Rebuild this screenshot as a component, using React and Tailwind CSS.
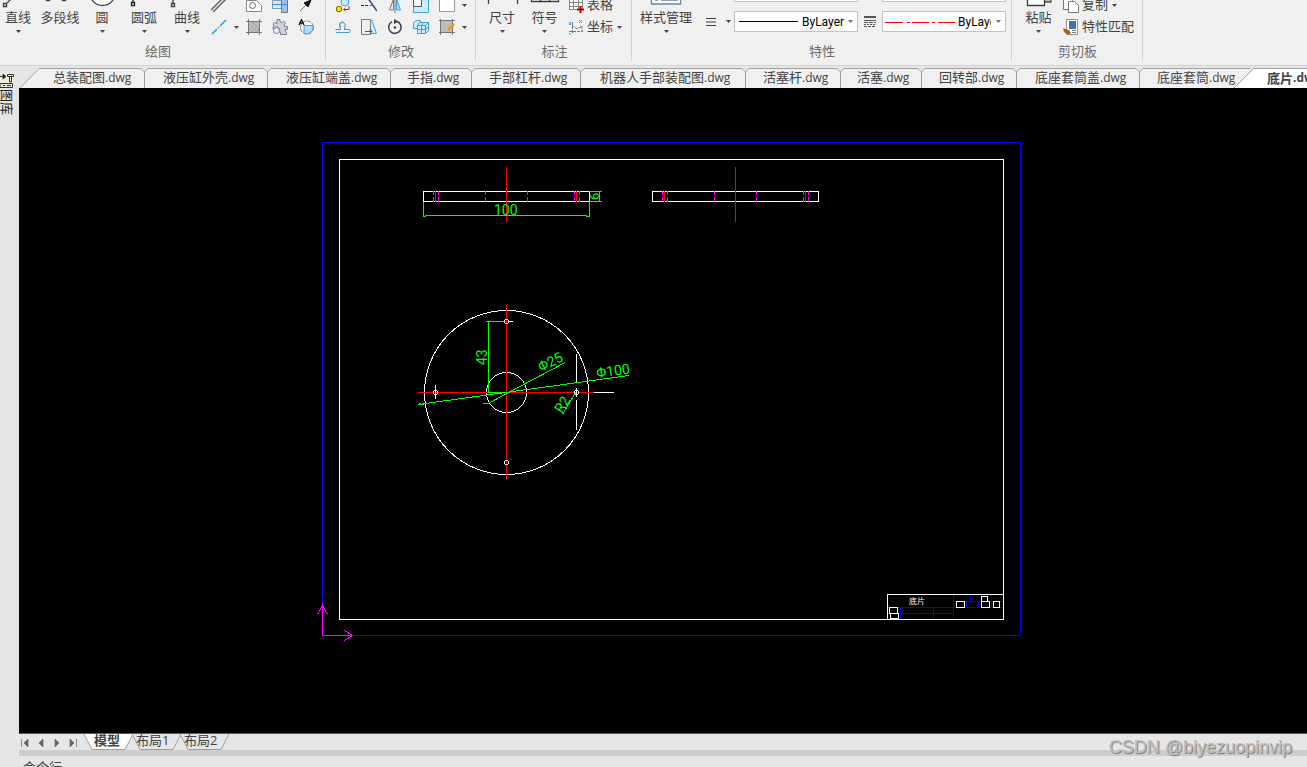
import React from 'react';

const BLUE = '#3f9fdc';
const DARK = '#3b3f46';

function Caret({ className = '' }) {
  return (
    <svg viewBox="0 0 5 3" className={`h-[3px] w-[5px] shrink-0 ${className}`} fill="#444" aria-hidden="true">
      <path d="M0 0h5L2.5 3z" />
    </svg>
  );
}

function BigButton({ label, width, caret = true, children }) {
  return (
    <button type="button" className={`flex shrink-0 flex-col items-center pb-0.5 ${width}`}>
      <svg viewBox="0 0 32 32" className="h-8 w-8 overflow-visible" fill="none" stroke={DARK} strokeWidth="1.3" aria-hidden="true">
        {children}
      </svg>
      <span className="h-[18px] text-[13px] leading-[18px] whitespace-nowrap">{label}</span>
      <span className="flex h-2.5 items-center">{caret && <Caret />}</span>
    </button>
  );
}

function Small({ label, children, width = 'w-[26px]' }) {
  return (
    <button type="button" aria-label={label} className={`flex h-[22px] items-center justify-center ${width}`}>
      <svg viewBox="0 0 16 16" className="h-4 w-4" fill="none" stroke={DARK} aria-hidden="true">
        {children}
      </svg>
    </button>
  );
}

function More({ label, show = true }) {
  return show ? (
    <button type="button" aria-label={label} className="flex h-[22px] w-[9px] items-center justify-center">
      <Caret />
    </button>
  ) : (
    <span className="h-[22px] w-[9px]" />
  );
}

function Labelled({ label, text, caret, children }) {
  return (
    <div className="flex h-[22px] items-center">
      <button type="button" aria-label={label} className="flex items-center gap-[3px]">
        <svg viewBox="0 0 16 16" className="h-4 w-4" fill="none" stroke={DARK} aria-hidden="true">
          {children}
        </svg>
        <span className="pb-0.5 text-[13px] leading-[18px] whitespace-nowrap">{text}</span>
      </button>
      {caret && <Caret className="ml-1" />}
    </div>
  );
}

function Group({ title, width, children }) {
  return (
    <section className={`relative flex shrink-0 flex-col ${width}`}>
      <div className="flex h-[38px] items-end overflow-hidden">{children}</div>
      <h2 className="flex h-[27px] items-center justify-center pr-1 text-[13px] text-[#6b6b6b]">{title}</h2>
      <span className="absolute top-0 right-0 h-[61px] w-px bg-[#d0d0d0]" />
    </section>
  );
}

function Combo({ label, value, red, clip }) {
  return (
    <div className="flex h-[21px] w-[124px] items-center border border-[#c3c3c3] bg-[#fdfdfd]">
      <svg viewBox="0 0 70 3" className="ml-0.5 h-[3px] w-[70px] shrink-0" aria-hidden="true">
        {red ? (
          <path d="M0 2.5h18M22 2.5h3M27 2.5h17M47 2.5h3M53 2.5h17" stroke="#f00" />
        ) : (
          <path d="M2 1.5h59" stroke="#000" />
        )}
      </svg>
      <select
        aria-label={label}
        defaultValue={value}
        className={`shrink-0 appearance-none overflow-hidden border-0 bg-transparent font-[Roboto,sans-serif] text-[12px] leading-[18px] whitespace-nowrap text-black outline-none ${clip ? 'ml-[3px] w-[33px]' : '-ml-[5px] w-[44px]'}`}
      >
        <option>{value}</option>
      </select>
      <Caret className="mr-1 ml-auto opacity-75" />
    </div>
  );
}

const files = [
  ['总装配图', 'w-[106px] pl-[14px]'],
  ['液压缸外壳', 'w-[123px] pl-[18px]'],
  ['液压缸端盖', 'w-[123px] pl-[18px]'],
  ['手指', 'w-[81px] pl-[16px]'],
  ['手部杠杆', 'w-[109px] pl-[17px]'],
  ['机器人手部装配图', 'w-[165px] pl-[19px]'],
  ['活塞杆', 'w-[95px] pl-[17px]'],
  ['活塞', 'w-[81px] pl-[16px]'],
  ['回转部', 'w-[95px] pl-[17px]'],
  ['底座套筒盖', 'w-[123px] pl-[18px]'],
  ['底座套筒', 'w-[110px] pl-[17px]'],
];

function FileTabs() {
  return (
    <nav aria-label="图纸" className="flex h-5 overflow-hidden pl-px">
      <svg viewBox="0 0 20 20" className="h-5 w-[19px] shrink-0" preserveAspectRatio="none" aria-hidden="true">
        <path d="M0 20L20 0V20z" fill="#f0f0f0" />
        <path d="M0 20L20 .5" stroke="#a0a0a0" fill="none" />
      </svg>
      {files.map(([name, cls], i) => (
        <button
          key={name}
          type="button"
          className={`relative flex h-5 shrink-0 items-center border-t border-[#a0a0a0] bg-[#f0f0f0] pb-0.5 whitespace-nowrap ${cls}`}
        >
          <span className="text-[13px] leading-[18px]">
            {name}
            <span className="text-[12px]">.dwg</span>
          </span>
          {i < files.length - 1 && (
            <svg viewBox="0 0 9 20" className="absolute -top-px -right-1 z-10 h-5 w-[9px]" aria-hidden="true">
              <path d="M0 0h9L4.5 4.5z" fill="#e6e6e6" />
              <path d="M0 .5h1L4.5 4L8 .5h1M4.5 4v16" fill="none" stroke="#a0a0a0" />
            </svg>
          )}
        </button>
      ))}
      <button type="button" aria-current="page" className="relative z-10 -ml-4 flex h-5 grow items-center overflow-hidden whitespace-nowrap">
        <svg viewBox="0 0 20 20" className="h-5 w-5 shrink-0" aria-hidden="true">
          <path d="M0 20L20 0V20z" fill="#fff" />
          <path d="M0 20L19.5 .5H20" stroke="#a0a0a0" fill="none" />
        </svg>
        <span className="flex h-5 grow items-center border-t border-[#a0a0a0] bg-white pb-0.5 pl-[13px] text-[13px] leading-[18px] font-bold">
          底片<span className="text-[12px]">.dwg</span>
        </span>
      </button>
    </nav>
  );
}

function SideView({ x }) {
  const hidden = [10, 15, 62, 104, 151, 156];
  return (
    <g fill="none">
      <path d={`M${x + 0.5} 191.5h166v10h-166z`} stroke="#fff" />
      <path d={hidden.map((d) => `M${x + d + 0.5} 191v4M${x + d + 0.5} 197v5`).join('')} stroke="#f0f" />
      <path d={`M${x + 83.5} 167v55M${x + 12.5} 191v11M${x + 153.5} 191v11`} stroke="#f00" />
    </g>
  );
}

function Drawing() {
  return (
    <svg
      viewBox="19 88 1288 645"
      className="absolute inset-0 h-full w-full"
      shapeRendering="crispEdges"
      fill="none"
      role="img"
      aria-label="底片"
    >
      <path d="M322.5 142.5h698v493h-698z" stroke="#00f" />
      <path d="M339.5 159.5h664v460h-664z" stroke="#fff" />
      <SideView x={423} />
      <SideView x={652} />
      <g stroke="#0f0">
        <path d="M423.5 202v15M589.5 202v15M424 216.5h2M425 215.5h162M586 216.5h3M589 191.5h13M589 201.5h13M599.5 191v11" />
      </g>

      <g stroke="#fff">
        <circle cx="506.5" cy="392.5" r="82" />
        <circle cx="506.5" cy="392.5" r="20" />
      </g>
      <path d="M418 392.5h176M506.5 305v175" stroke="#f00" />
      <g stroke="#fff">
        <circle cx="506.5" cy="321.5" r="2" />
        <circle cx="506.5" cy="462.5" r="2" />
        <circle cx="435.5" cy="392.5" r="2" />
        <circle cx="576.5" cy="392.5" r="2" />
        <path d="M508 321.5h5M435.5 385v14M576.5 354v29M576.5 388v9M576.5 400v30M594 392.5h20" />
      </g>
      <g stroke="#0f0">
        <path d="M486 321.5h20M488.5 321v72M488 392.5h18" />
        <path d="M483 403.5h5L565 362.5M418 404.5L629 375.5M419 403l3 2l3-2M576 392L562.5 414.5" />
      </g>
      <g fill="#0f0" fontFamily="Roboto, sans-serif" fontSize="14">
        <text x="494" y="215">100</text>
        <text transform="translate(487 365) rotate(-90)">43</text>
        <text transform="translate(541 372) rotate(-27)">Φ25</text>
        <text transform="translate(597 378) rotate(-8)">Φ100</text>
        <text transform="translate(562 414) rotate(-58)">R2</text>
        <text transform="translate(599 200) rotate(-90)" fontSize="13">6</text>
      </g>

      <path d="M887 607.5h66M887 613.5h66M900.5 607v12M933.5 607v12M953.5 595v24M953 601.5h50M953 607.5h50M970.5 595v6M966.5 601v6M978.5 601v6M991.5 601v6" stroke="#00f" />
      <g stroke="#fff">
        <path d="M887.5 619.5v-25h116" />
        <path fill="#000" d="M889.5 607.5h8v6h-8zM890.5 613.5h8v5h-8zM956.5 601.5h8v6h-8zM981.5 596.5h6v5h-6zM981.5 601.5h8v6h-8zM993.5 601.5h6v6h-6z" />
      </g>
      <text x="909" y="604" fill="#fff" fontSize="8">底片</text>

      <path d="M322.5 635.5v-30M317.5 614.5l5-9l5 9M322 635.5h30M344.5 630.5l8 5l-8 5" stroke="#f0f" />
    </svg>
  );
}

function LayoutTab({ label, active }) {
  return (
    <button
      type="button"
      className={`relative -mr-2 flex h-4 w-14 items-center justify-start whitespace-nowrap ${active ? 'z-10 pl-[13px] font-bold' : 'pl-[7px]'}`}
    >
      <svg viewBox="0 0 56 16" className="absolute inset-0 h-full w-full overflow-visible" aria-hidden="true">
        <path d="M3 0L11 15.5H44L52 0" fill={active ? '#fff' : '#e6e6e6'} stroke="#a0a0a0" />
      </svg>
      <span className="relative h-4 text-[13px] leading-3">{label}</span>
    </button>
  );
}

const nav = [
  ['第一个', 'M1.5 1v8M8 1v8L4 5z'],
  ['上一个', 'M7 1v8L3 5z'],
  ['下一个', 'M3 1v8L7 5z'],
  ['最后一个', 'M8.5 1v8M2 1v8L6 5z'],
];

export default function App() {
  return (
    <div className='relative flex h-screen flex-col overflow-hidden bg-[#e6e6e6] font-["Open_Sans","Noto_Sans_CJK_SC",sans-serif] text-[#444]'>
      <header className="flex h-[66px] shrink-0 border-b border-[#d3d3d3] bg-[#f0f0f0]">
        <Group title="绘图" width="w-[326px] pr-1.5">
          <BigButton label="直线" width="w-9">
            <path d="M1.500 27.500h3v3h-3zM5 27L20 12" />
          </BigButton>
          <BigButton label="多段线" width="w-12" caret={false}>
            <path d="M2.500 21.500h3v3h-3zM18.500 21.500h3v3h-3z" />
          </BigButton>
          <BigButton label="圆" width="w-9">
            <circle cx="16.500" cy="17" r="12.500" fill="#fff" />
          </BigButton>
          <BigButton label="圆弧" width="w-12">
            <path d="M3.500 26.500h3v3h-3zM5 26v-5" stroke="#222" />
          </BigButton>
          <BigButton label="曲线" width="w-[38px]">
            <path d="M.5 27.500h3v3h-3zM2 27v-5" />
          </BigButton>
          <div className="flex flex-col">
            <Small label="双线"><path d="M2 15L15 2M0 13L13 0" strokeWidth="1.500" stroke="#666" /></Small>
            <Small label="中心线"><path d="M1 15L6 10M7 9L8 8M9 7L15 1" stroke="#2aa5e0" strokeWidth="1.600" /></Small>
          </div>
          <div className="flex flex-col"><More show={false} /><More label="更多线型" /></div>
          <div className="flex flex-col">
            <Small label="轮廓"><path d="M.5 3.500h10l5 5v6h-15z" fill="#fff" stroke="#888" /><circle cx="6.500" cy="8.500" r="3" stroke="#667" /></Small>
            <Small label="填充"><path d="M2.500 2.500h11v11h-11z" fill="#bbb" stroke="#777" /><path d="M2.500 0v16M13.500 0v16M0 2.500h16M0 13.500h16M9 14l5-5" stroke="#777" /><path d="M3 5l8 8M3 9l4 4M6 3l7 7" stroke="#a4a4a4" /></Small>
          </div>
          <div className="flex flex-col">
            <Small label="轴"><path d="M.5 3.500h9v8h-9z" fill="#dbe5ef" stroke="#8a97aa" /><path d="M9.500 1.500h6v14h-6z" fill="#a5bdd8" stroke="#64789a" /><path d="M0 7.500h16" stroke="#2a8fe8" /></Small>
            <Small label="齿轮">
              <path d="M5 .5h3v2.500l2 .5l1.500-1.500l2 2l-1.500 2l.5 1.500h3v3h-2.500v1.500l1.500 1v2.500h-6v-2.500h-1.500a3 3 0 1 0-5-3l-1.500-1l1.500-2l-1-2l1.500-1.500l2.500 1z" fill="#ccd3de" stroke="#77808e" />
              <circle cx="4.500" cy="11.500" r="3" fill="#f0f0f0" stroke="#77808e" />
            </Small>
          </div>
          <div className="flex flex-col">
            <Small label="箭头"><path d="M2 14L8 8" stroke="#777" /><path d="M13 3L10 10L8 8L6 6z" fill="#111" stroke="#111" /></Small>
            <Small label="局部放大">
              <circle cx="9" cy="8.500" r="6.500" fill="#fff" stroke="#777" strokeDasharray="4 1" />
              <path d="M6 6.500h9a7 7 0 0 1-9 8z" fill="#b4e1fa" stroke={BLUE} />
              <path d="M1 6L3.500 .5L6 6M2 4h3" stroke="#111" strokeWidth="1.300" />
            </Small>
          </div>
        </Group>

        <Group title="修改" width="w-[150px] pl-1">
          <div className="flex flex-wrap">
            <Small label="复制对象"><circle cx="10" cy="5" r="4" fill="#c7e9ff" stroke={BLUE} /><rect x="1.500" y="9.500" width="5" height="5" rx="1.500" fill="#ffe600" stroke="#776a00" /><path d="M9 12.500h5V9M10.500 11l-2 1.500l2 1.500" stroke="#b22" /></Small>
            <Small label="延伸"><path d="M0 8.500h7" stroke="#333" strokeDasharray="3 1" /><path d="M8 8.500h4" stroke={BLUE} /><path d="M6 0l10 14" stroke="#25497c" strokeWidth="1.500" /></Small>
            <Small label="镜像"><path d="M6.500 2v11H2.500z" fill="#eee" stroke="#777" /><path d="M9.500 2v11h4z" fill="#b4e1fa" stroke={BLUE} /><path d="M8 0v16" stroke="#777" /></Small>
            <Small label="缩放"><path d="M.5.500h15v15H.5z" fill="#c9edff" stroke={BLUE} /><path d="M.5 1.500h8v8h-8z" fill="#fff" stroke="#555" /></Small>
            <Small label="阵列"><path d="M.5.500h15v14H.5z" fill="#fff" stroke="#999" /><path d="M.5 0v15" stroke={BLUE} strokeDasharray="2 1" /></Small>
            <More label="更多修改" />
            <Small label="偏移">
              <path d="M.5 10.500h5V9.500C1 1 13 1 9.500 9v1.500h5" stroke="#6a7f95" /><path d="M1 13.500h13.500q1.500-1.500 0-3M5.500 9q-2-7 3-5" stroke={BLUE} />
            </Small>
            <Small label="拉伸"><path d="M9 1.500h2l4.500 13H9z" fill="#c9edff" stroke={BLUE} /><path d="M.5.500h9v15h-9z" fill="#eee" stroke="#777" /><path d="M4 12.500h7M9 10.500l2 2l-2 2" stroke="#555" /></Small>
            <Small label="旋转"><path d="M9.500 2.200A6.200 6.200 0 1 1 5 2.700" strokeWidth="1.500" /><path d="M7 0l4.500 2.500L7 5z" fill={DARK} stroke="none" /><circle cx="8" cy="8.500" r="1.300" fill={DARK} stroke="none" /></Small>
            <Small label="分解">
              <path d="M.5 3.500l3-2h4v5l-2 3h-5z" fill="#c9edff" stroke={BLUE} />
              <path d="M4.500 6.500l2-3h9v8l-3 3h-8z" fill="#c9edff" stroke={BLUE} />
              <path d="M4.500 6.500h8v8M12.500 6.500l3-3M8.500 6.500v8M8.500 6.500l2-3M4.500 10.500h8l3-3" stroke={BLUE} />
            </Small>
            <Small label="编辑填充"><path d="M1.500 1.500h12v12h-12z" fill="#bbb" stroke="#777" /><path d="M0 1.500h16M1.500 0v16M0 13.500h16M13.500 0v16" stroke="#777" /><path d="M9 11l6-6" stroke="#e79a1b" strokeWidth="2.500" /></Small>
            <More label="更多编辑" />
          </div>
        </Group>

        <Group title="标注" width="w-[156px] pl-[5px]">
          <BigButton label="尺寸" width="w-[42px]"><path d="M2.500 18v10M31.500 18v10M3 22.500h28" /></BigButton>
          <BigButton label="符号" width="w-[43px]"><path d="M2.500 14.500h27v11h-27zM11.500 15v10M20.500 15v10" fill="#fff" /></BigButton>
          <div className="flex flex-col pl-0.5">
            <Labelled label="表格" text="表格">
              <path d="M1.500 1.500h13v11h-13zM1.500 5.500h13M1.500 9.500h13M5.500 1.500v11M10.500 1.500v11" fill="#fff" stroke="#888" /><path d="M9 12.500h7M12.500 9v7" stroke="#b00" strokeWidth="2" />
            </Labelled>
            <Labelled label="坐标" text="坐标" caret>
              <path d="M4.500 3v12M1 12.500h14M4 6l5 4l5-3v6" stroke="#778" strokeDasharray="3 1" /><path d="M1 3l2 3M3 3l-2 3M11 1l3 3M14 1l-3 3M1 14l2 2" stroke={BLUE} />
            </Labelled>
          </div>
        </Group>

        <Group title="特性" width="w-[380px] pr-1 pl-2">
          <BigButton label="样式管理" width="w-[52px]">
            <path d="M1.500 10.500h29v17.500h-29z" fill="#fff" stroke="#6c82a8" /><path d="M5 24h3M11 24h17" stroke="#8d9dba" strokeWidth="2" />
          </BigButton>
          <button type="button" aria-label="线宽" className="mb-1.5 ml-3.5 flex h-[21px] shrink-0 items-center gap-2.5">
            <svg viewBox="0 0 10 10" className="h-2.5 w-2.5" stroke={DARK} aria-hidden="true">
              <path d="M0 1.500h10M0 5h10M0 8.500h10" strokeWidth="1.200" />
            </svg>
            <Caret />
          </button>
          <div className="mb-1.5 ml-[3px] flex flex-col gap-[9px]">
            <Combo label="颜色" value="ByLayer" />
            <Combo label="线宽样式" value="ByLayer" />
          </div>
          <svg viewBox="0 0 12 12" className="mx-1.5 mb-2.5 h-3 w-3 shrink-0" stroke="#555" aria-hidden="true">
            <path d="M0 1h12" strokeWidth="2" /><path d="M0 4.500h12" /><path d="M0 6.500h12" strokeDasharray="4 1" /><path d="M0 8.500h12" strokeDasharray="2 1" /><path d="M0 10.500h12" strokeDasharray="3 1" />
          </svg>
          <div className="mb-1.5 flex flex-col gap-[9px]">
            <Combo label="图层" value="ByLayer" clip />
            <Combo label="线型" value="ByLayer" red clip />
          </div>
        </Group>

        <Group title="剪切板" width="w-[131px] pl-1">
          <BigButton label="粘贴" width="w-[45px]">
            <path d="M20 18h8v8h-8z" fill="#c5b8a5" stroke="#555" /><path d="M4.500 14.500h17v15h-17z" fill="#fff" />
          </BigButton>
          <div className="flex flex-col pl-0.5">
            <Labelled label="复制" text="复制" caret>
              <path d="M.5.500h6l3 3v9h-9z" fill="#fff" stroke="#777" /><path d="M5.500 4.500h6l4 4v7h-10z" fill="#fff" stroke="#777" />
            </Labelled>
            <Labelled label="特性匹配" text="特性匹配">
              <path d="M3.500.500h11v15h-11z" fill="#fff" stroke="#8a93a0" /><path d="M6 2h7v8H6z" fill="#3d72b4" stroke="none" /><path d="M9 11.500h4M9 13.500h4" stroke="#777" /><path d="M0 9l3 1l3 1l2 3l-3 2l-4-3z" fill="#a9641c" stroke="none" />
            </Labelled>
          </div>
        </Group>
      </header>

      <div className="flex min-h-0 grow">
        <aside className="flex w-[19px] shrink-0 flex-col pt-[7px]">
          <button type="button" aria-label="固定" className="h-[15px] w-3.5 bg-[#eeeedd]">
            <svg viewBox="0 0 14 15" className="h-[15px] w-3.5" fill="none" stroke="#333" aria-hidden="true">
              <path d="M0 3.500h5M3 1l3 2.500L3 6z" fill="#111" /><path d="M7.500 1.500h6v2h-6zM9.500 4v5h2V4M0 10.500h12.500v4H0zM3 12.500h2M7 12.500h4" />
            </svg>
          </button>
          <button type="button" className="mt-px w-3.5 text-[13px] leading-[14px] text-[#222] [text-orientation:sideways] [writing-mode:vertical-rl]">
            图库
          </button>
        </aside>
        <main className="flex min-w-0 grow flex-col pt-0.5">
          <FileTabs />
          <div className="relative min-h-0 grow bg-black">
            <Drawing />
          </div>
          <div className="flex h-[17px] shrink-0 items-start border-t border-[#555] pl-px">
            <div className="mt-1 flex gap-1.5 pr-[3px]">
              {nav.map(([label, d]) => (
                <button key={label} type="button" aria-label={label} className="h-2.5 w-2.5">
                  <svg viewBox="0 0 10 10" className="h-2.5 w-2.5" fill="#666" stroke="#666" strokeWidth=".7" aria-hidden="true">
                    <path d={d} />
                  </svg>
                </button>
              ))}
            </div>
            <LayoutTab label="模型" active />
            <LayoutTab label="布局1" />
            <LayoutTab label="布局2" />
          </div>
          <div className="h-1.5 shrink-0 bg-[#cdcdcd]" />
          <div className="h-[11px] shrink-0 overflow-hidden pt-0.5 pl-1 text-[13px] leading-[18px]">命令行</div>
        </main>
      </div>

      <div className='pointer-events-none absolute right-[15px] bottom-2 font-["Liberation_Sans",sans-serif] text-[18px] leading-6 text-[#bdbdbd] [text-shadow:1px_1px_1px_#777]'>
        CSDN @biyezuopinvip
      </div>
    </div>
  );
}
